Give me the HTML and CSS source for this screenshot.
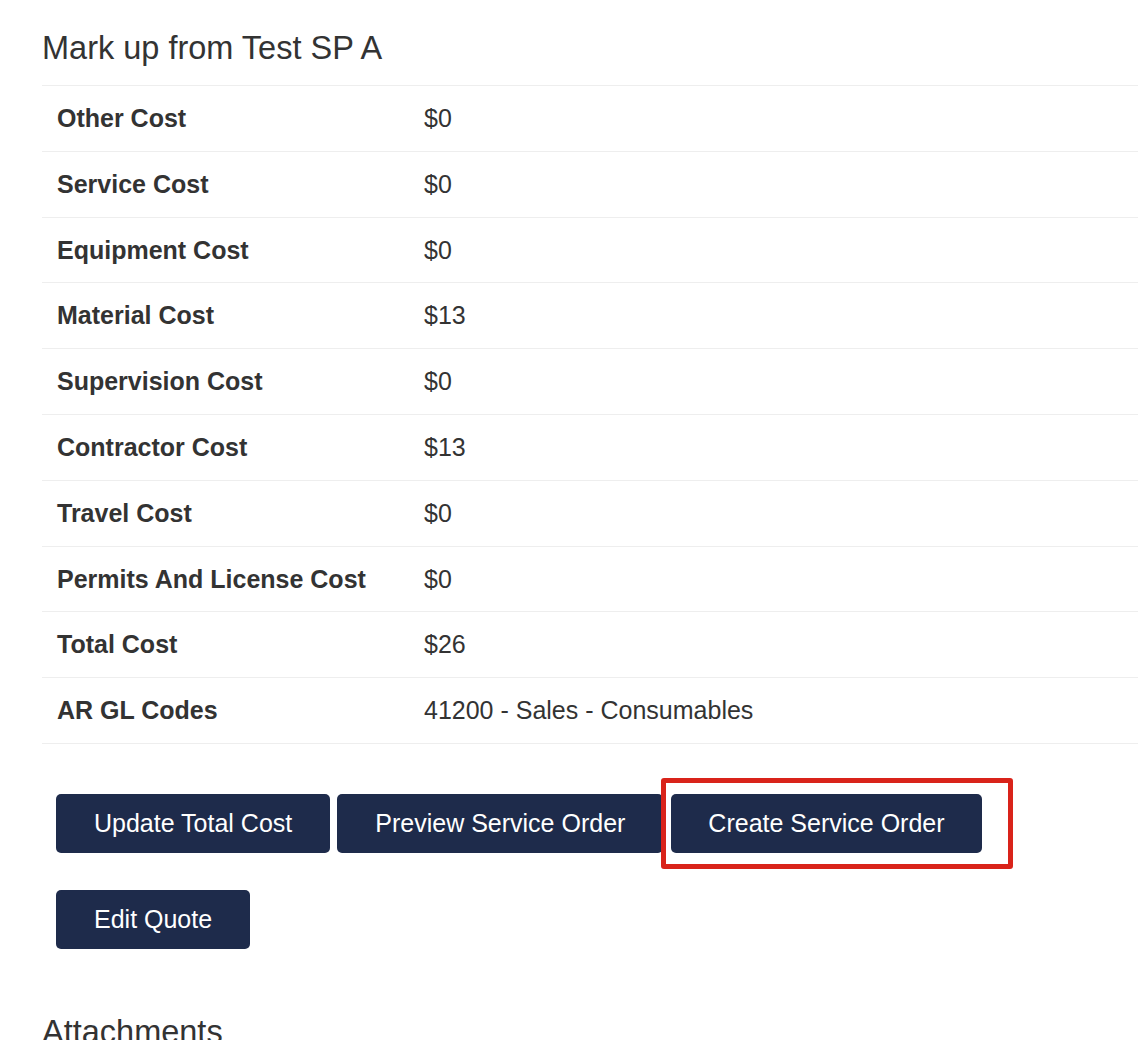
FILE: index.html
```html
<!DOCTYPE html>
<html>
<head>
    <meta charset="UTF-8">
    <title>Quote Mark up</title>
    <link rel="stylesheet" href="styles.css">
</head>
<body>
    <div class="container">
        <h3>Mark up from Test SP A</h3>

        <!-- Cost breakdown -->
        <table class="cost-table">
            <tr><td class="label">Other Cost</td><td>$0</td></tr>
            <tr><td class="label">Service Cost</td><td>$0</td></tr>
            <tr><td class="label">Equipment Cost</td><td>$0</td></tr>
            <tr><td class="label">Material Cost</td><td>$13</td></tr>
            <tr><td class="label">Supervision Cost</td><td>$0</td></tr>
            <tr><td class="label">Contractor Cost</td><td>$13</td></tr>
            <tr><td class="label">Travel Cost</td><td>$0</td></tr>
            <tr><td class="label">Permits And License Cost</td><td>$0</td></tr>
            <tr><td class="label">Total Cost</td><td>$26</td></tr>
            <tr><td class="label">AR GL Codes</td><td>41200 - Sales - Consumables</td></tr>
        </table>

        <!-- Actions -->
        <div class="actions">
            <button class="btn">Update Total Cost</button>
            <button class="btn">Preview Service Order</button>
            <span class="marked">
                <button class="btn">Create Service Order</button>
                <span class="highlight"></span>
            </span>
        </div>
        <div class="actions">
            <button class="btn">Edit Quote</button>
        </div>

        <h3 class="attachments">Attachments</h3>
    </div>
</body>
</html>
```

FILE: styles.css
```css
body { margin: 0; font-family: "Liberation Sans", Arial, Helvetica, sans-serif; color: #333; background: #fff; }
.container { padding: 0 0 0 42px; }
h3 { font-size: 32.5px; font-weight: normal; line-height: 34px; margin: 31px 0 20px; }
.cost-table { width: 100%; border-collapse: collapse; font-size: 25px; }
.cost-table td { border-top: 1px solid #eee; padding: 16px 15px; line-height: 32.8px; }
.cost-table tr:last-child td { border-bottom: 1px solid #eee; }
.cost-table td.label { width: 337px; font-weight: bold; }
.actions { display: flex; align-items: flex-start; gap: 7px; padding-left: 14px; }
.actions:first-of-type { margin-top: 50px; }
.actions + .actions { margin-top: 37px; }
.btn { font-family: inherit; font-size: 25px; color: #fff; background: #1e2b4b; border: 0; border-radius: 5px; height: 59px; padding: 0 38px; cursor: pointer; }
.marked { position: relative; display: inline-block; margin-left: 1px; }
.marked .btn { padding: 0 37px; }
.highlight { position: absolute; left: -10px; top: -16px; right: -31px; bottom: -16px; border: 5px solid #d9231a; border-radius: 3px; pointer-events: none; }
.attachments { margin-top: 66px; }
```
